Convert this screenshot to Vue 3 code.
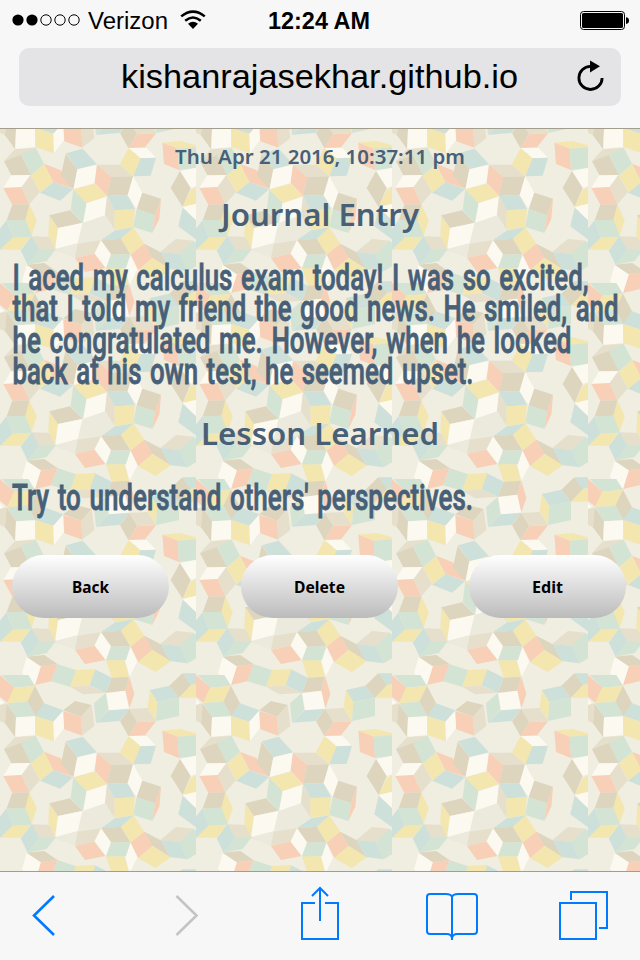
<script setup>
const W = '#fcf9f0', C = '#f8cfb7', Y = '#f3e7af', B = '#cee0da', G = '#d3e4d5', T = '#ddd5bd', L = '#e5dfcc', S = '#eceadd'

// One wallpaper tile on a 588-unit square
const cubes = [
  [S, '250,572 315,550 343,593 303,625 233,635'], [S, '166,650 233,633 225,677 165,655'],
  [L, '95,613 150,615 170,653 118,655'], [Y, '38,617 95,614 60,653 0,653'],
  [B, '20,565 0,590 0,653 38,617'], [G, '20,565 84,563 95,614 38,617'],
  [B, '95,613 118,653 83,698 62,655'], [G, '115,654 167,652 140,687 83,698'],
  [Y, '148,550 174,588 165,650 145,610'], [T, '148,550 210,535 247,572 174,588'],
  [W, '174,588 247,573 233,633 166,651'], [L, '233,635 303,625 283,665 225,677'],
  [G, '220,472 260,513 248,573 212,535'], [W, '260,513 321,494 315,550 250,572'],
  [Y, '220,472 285,455 321,492 260,513'], [C, '132,395 182,415 220,470 160,450'],
  [B, '160,450 219,472 180,506 120,482'], [Y, '132,395 160,450 122,481 92,432'],
  [G, '63,366 107,347 132,395 92,431'], [L, '45,352 107,347 63,368 12,388'],
  [T, '12,388 63,368 92,429 35,431'], [W, '33,430 91,429 65,465 10,468'],
  [C, '10,468 65,465 88,517 37,518'], [L, '91,430 120,480 88,517 65,465'],
  [T, '37,518 88,517 84,563 20,565'], [Y, '88,517 110,565 95,611 76,563'],
  [B, '198,364 248,350 291,397 232,412'], [T, '197,365 232,412 220,471 183,430'],
  [W, '232,412 291,398 283,453 221,471'], [C, '291,398 334,435 321,491 284,452'],
  [L, '291,398 360,398 399,433 334,435'], [T, '334,435 399,433 383,489 321,491'],
  [B, '321,491 383,489 405,532 343,535'], [Y, '343,535 405,532 400,586 343,593'],
  [L, '321,493 343,535 343,592 315,548'], [Y, '385,349 427,380 399,433 360,397'],
  [W, '387,348 440,348 468,377 422,379'], [B, '422,379 468,377 452,431 400,433'],
  [W, '400,433 427,482 410,531 383,490'], [T, '427,482 483,500 465,550 410,532'],
  [C, '483,500 478,560 457,603 465,550'], [G, '410,532 465,550 457,603 400,585'],
  [Y, '400,586 433,635 393,668 362,620'], [B, '400,586 362,621 303,625 345,595'],
  [T, '303,625 362,620 391,667 333,668'], [W, '303,625 333,667 318,709 284,664'],
  [G, '333,668 391,667 378,709 318,709'], [C, '283,665 316,708 255,720 225,678'],
  [C, '433,635 458,677 415,714 392,668'], [T, '433,635 482,661 511,712 458,678'],
  [Y, '458,678 512,712 467,744 414,714'], [L, '481,660 528,621 580,626 539,666'],
  [B, '481,660 539,666 563,718 510,711'], [G, '580,626 588,632 588,703 563,718 538,666'],
  [W, '393,80 412,125 389,170 374,118'], [Y, '318,120 374,121 387,170 335,173'],
  [T, '335,173 387,170 376,212 318,218'], [B, '285,148 335,173 318,218 268,196'],
  [Y, '228,150 287,147 268,197 210,200'], [G, '172,132 228,151 210,200 153,184'],
  [L, '210,200 268,197 318,218 250,223'], [C, '121,138 172,132 153,184 105,195'],
  [W, '80,110 123,138 105,195 66,160'], [T, '80,110 133,105 172,132 121,138'],
  [G, '5,165 85,165 105,197 42,203'], [C, '0,165 43,203 22,248 0,230'],
  [Y, '42,203 104,198 82,246 22,249'], [T, '105,197 132,250 107,290 82,245'],
  [G, '22,250 82,245 106,289 48,292'], [W, '0,238 12,249 0,256'],
  [L, '0,255 20,250 15,310 0,302'], [T, '20,250 48,292 45,351 15,310'],
  [W, '48,292 105,289 105,345 46,350'], [B, '132,250 190,271 160,305 105,288'],
  [Y, '105,288 160,305 162,364 106,345'], [W, '190,272 192,325 162,364 160,305'],
  [T, '190,271 225,243 275,255 243,290'], [L, '275,255 283,318 247,346 243,290'],
  [C, '190,273 243,290 247,347 193,328'], [G, '318,218 325,270 288,308 282,250'],
  [W, '318,220 376,212 388,265 328,273'], [C, '388,170 403,222 388,265 376,211'],
  [B, '326,271 388,267 358,303 288,308'], [T, '388,267 412,306 385,348 360,303'],
  [L, '388,267 443,264 468,303 412,306'], [C, '412,307 468,304 435,346 385,348'],
  [Y, '450,210 472,245 468,303 443,262'], [B, '450,210 508,197 537,233 472,245'],
  [G, '472,245 537,233 537,288 468,303'], [T, '508,197 547,160 574,195 537,233'],
  [B, '547,160 588,160 588,192 573,195'], [Y, '573,195 588,192 588,233 538,233'],
  [Y, '487,332 540,327 588,340 588,347 535,351'], [C, '487,332 533,350 537,414 492,396'],
  [G, '533,350 588,346 588,408 537,414'], [W, '540,417 588,407 588,462 572,468'],
  [T, '540,417 572,468 548,525 512,468'], [Y, '572,475 588,465 588,520 548,525'],
  [W, '548,525 588,515 588,565'], [B, '548,527 588,565 588,622 535,583'],
]

const entry = [
  ['I aced my calculus exam today! I was so excited,', 576],
  ['that I told my friend the good news. He smiled, and', 606],
  ['he congratulated me. However, when he looked', 559],
  ['back at his own test, he seemed upset.', 461],
]
const buttons = [['Back', 37], ['Delete', 51], ['Edit', 31]]
</script>

<template>
  <div class="phone">
    <header>
      <div class="status">
        <svg class="signal" width="68" height="12">
          <circle v-for="n in 5" :key="n" :cx="n * 14 - 8" cy="6" :r="n < 3 ? 5.6 : 5.2" :class="n < 3 ? 'full' : 'hollow'" />
        </svg>
        <svg class="carrier" width="80" height="40"><text x="0" y="29" textLength="80" lengthAdjust="spacingAndGlyphs">Verizon</text></svg>
        <svg class="wifi" width="26" height="20" viewBox="0 0 26 20">
          <path d="M1.2 6.4Q13-3.2 24.8 6.4M5.2 10.7Q13 4.3 20.8 10.7" fill="none" stroke="#000" stroke-width="2.5" />
          <path d="M8 13.8Q13 9.8 18 13.8L13 19Z" />
        </svg>
        <svg class="time" width="102" height="40"><text x="0" y="29" textLength="102" lengthAdjust="spacingAndGlyphs">12:24 AM</text></svg>
        <svg class="battery" width="50" height="20" viewBox="0 0 50 20">
          <rect x=".5" y=".5" width="44" height="18" rx="3" fill="none" stroke="#000" />
          <rect x="2" y="2" width="41" height="15" rx="1.6" />
          <path d="M46 6.2Q49 6.5 49 9.6T46 13Z" />
        </svg>
      </div>
      <div class="address">
        <svg class="url" width="397" height="58"><text x="0" y="40" textLength="397" lengthAdjust="spacingAndGlyphs">kishanrajasekhar.github.io</text></svg>
        <svg class="reload" width="28" height="32" viewBox="0 0 28 32">
          <path d="M13.500 6.300A11.600 11.600 0 1 0 25.100 17.900" fill="none" stroke="#000" stroke-width="2.800" />
          <path d="M13 .5V12.500L23 6.200Z" />
        </svg>
      </div>
    </header>

    <main>
      <svg class="wallpaper" aria-hidden="true">
        <defs>
          <pattern id="tile" width="196" height="196" y="99" patternUnits="userSpaceOnUse">
            <g transform="scale(.33333)">
              <rect width="589" height="589" fill="#f0ede1" />
              <g v-for="dy in [0, -588]" :key="dy" :transform="`translate(0 ${dy})`">
                <polygon v-for="(c, i) in cubes" :key="i" :fill="c[0]" :points="c[1]" />
              </g>
            </g>
          </pattern>
        </defs>
        <rect width="100%" height="100%" fill="url(#tile)" />
      </svg>

      <div class="content">
        <svg class="date" width="290" height="56"><text x="0" y="35" textLength="290" lengthAdjust="spacingAndGlyphs">Thu Apr 21 2016, 10:37:11 pm</text></svg>
        <svg class="heading" width="198" height="72"><text x="0" y="41" textLength="198" lengthAdjust="spacingAndGlyphs">Journal Entry</text></svg>
        <svg class="prose" width="616" height="139">
          <text v-for="(l, i) in entry" :key="i" x="0.5" :y="33 + i * 31.3" :textLength="l[1]" lengthAdjust="spacingAndGlyphs">{{ l[0] }}</text>
        </svg>
        <svg class="heading" width="238" height="72"><text x="0" y="49" textLength="238" lengthAdjust="spacingAndGlyphs">Lesson Learned</text></svg>
        <svg class="prose" width="616" height="87">
          <text x="0" y="42" textLength="461" lengthAdjust="spacingAndGlyphs">Try to understand others' perspectives.</text>
        </svg>
        <div class="actions">
          <button v-for="b in buttons" :key="b[0]">
            <svg :width="b[1]" height="24"><text x="0" y="18" :textLength="b[1]" lengthAdjust="spacingAndGlyphs">{{ b[0] }}</text></svg>
          </button>
        </div>
      </div>
    </main>

    <footer>
      <svg width="640" height="88" viewBox="0 872 640 88" fill="none" stroke="#007aff" stroke-width="2">
        <path d="M54 896L34 915.5L54 935" stroke-width="2.6" />
        <path d="M176.500 896L196.500 915.500L176.500 935" stroke="#c4c4c4" stroke-width="2.6" />
        <path d="M315 903H302V939H338V903H325M320 921V889M312 896L320 888L328 896" />
        <path d="M452 940V897Q451 894 446 894H430Q427 894 427 897V931Q427 934 430 934H447Q451 934 452 938Q453 934 457 934H474Q477 934 477 931V897Q477 894 474 894H458Q453 894 452 897" />
        <path d="M560 903H596V939H560ZM571 900V892H607V928H599" />
      </svg>
    </footer>
  </div>
</template>

<style>
body { margin: 0; overflow: hidden; }
</style>

<style scoped>
.phone { width: 640px; height: 960px; display: flex; flex-direction: column; background: #f7f7f7; font-family: "Liberation Sans", sans-serif; }
svg { display: block; overflow: visible; flex: none; }
header { height: 128px; box-sizing: border-box; }
.status { height: 40px; display: flex; align-items: flex-start; padding-left: 12px; }
.signal { margin-top: 14px; }
.signal .hollow { fill: none; stroke: #000; stroke-width: 1; }
.carrier { margin-left: 8px; font-size: 23.5px; }
.wifi { margin: 10px 0 0 12px; }
.time { margin-left: 62px; font-size: 23.5px; font-weight: 700; }
.battery { margin: 11px 0 0 210px; }
.address { height: 58px; margin: 8px 19px 0; border-radius: 10px; background: #e4e4e6; display: flex; }
.url { margin-left: 102px; font-size: 33.5px; }
.reload { margin: 12px 0 0 59px; }
main { height: 744px; box-sizing: border-box; border-top: 1px solid #a29d8c; border-bottom: 1px solid #a29d8c; display: grid; overflow: hidden; }
.wallpaper, .content { grid-area: 1 / 1; }
.wallpaper { width: 640px; height: 742px; overflow: hidden; }
.content { display: flex; flex-direction: column; align-items: center; z-index: 1; fill: #475f77; }
.date { font: 600 20.5px "Noto Sans", sans-serif; }
.heading { font: 600 31px "Noto Sans", sans-serif; }
.prose { font: 500 36px Roboto, sans-serif; word-spacing: 3px; }
.prose text { stroke: #475f77; stroke-width: .8px; }
.actions { display: flex; justify-content: space-between; width: 614px; margin-left: -2px; }
button { width: 157px; height: 63px; padding: 0; border: 0; border-radius: 32px; background: linear-gradient(#fff, #bbb); display: flex; align-items: center; justify-content: center; fill: #000; font: 700 16px "Noto Sans", sans-serif; }
footer { height: 88px; }
</style>
